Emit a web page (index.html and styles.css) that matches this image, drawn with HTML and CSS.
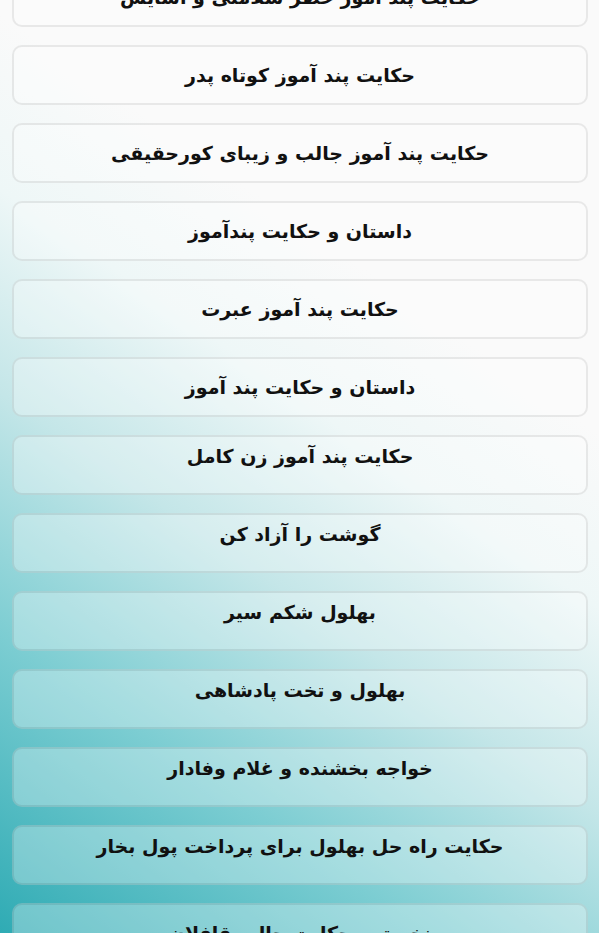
FILE: index.html
```html
<!DOCTYPE html>
<html lang="fa" dir="rtl">
  <head>
    <meta charset="UTF-8" />
    <meta name="viewport" content="width=device-width, initial-scale=1.0" />
    <title>حکایت ها</title>
    <link rel="stylesheet" href="styles.css">
  </head>
  <body>
    <div class="stage">
      <ul class="story-list">
        <li class="story">حکایت پند آموز خطر سلامتی و آسایش</li>
        <li class="story">حکایت پند آموز کوتاه پدر</li>
        <li class="story">حکایت پند آموز جالب و زیبای کورحقیقی</li>
        <li class="story">داستان و حکایت پندآموز</li>
        <li class="story">حکایت پند آموز عبرت</li>
        <li class="story">داستان و حکایت پند آموز</li>
        <li class="story story-top">حکایت پند آموز زن کامل</li>
        <li class="story story-top">گوشت را آزاد کن</li>
        <li class="story story-top">بهلول شکم سیر</li>
        <li class="story story-top">بهلول و تخت پادشاهی</li>
        <li class="story story-top">خواجه بخشنده و غلام وفادار</li>
        <li class="story story-top">حکایت راه حل بهلول برای پرداخت پول بخار</li>
        <li class="story">نخستین حکایت جالب قافلان</li>
      </ul>
    </div>
  </body>
</html>
```

FILE: styles.css
```css
* {
  margin: 0;
  padding: 0;
  box-sizing: border-box;
}

html,
body {
  height: 100%;
  overflow: hidden;
}

.stage {
  overflow: hidden;
  width: 100vw;
  height: 100vh;
  background: linear-gradient(35deg, #2fabb4 0%, #7ccdd2 22%, #c4e6e8 40%, #eef7f7 55%, #fafafa 68%);
}

.story-list {
  display: flex;
  flex-direction: column;
  gap: 18px;
  padding: 0 11px 0 12px;
  margin-top: -33px;
  list-style: none;
}

.story {
  display: flex;
  flex-shrink: 0;
  align-items: center;
  justify-content: center;
  height: 60px;
  border: 2px solid rgba(0, 0, 0, 0.08);
  border-radius: 10px;
  background-color: rgba(255, 255, 255, 0.3);
  color: #111;
  font-family: "DejaVu Sans", sans-serif;
  font-size: 19px;
  font-weight: bold;
}

.story-top {
  align-items: flex-start;
  padding-top: 8px;
}
```
